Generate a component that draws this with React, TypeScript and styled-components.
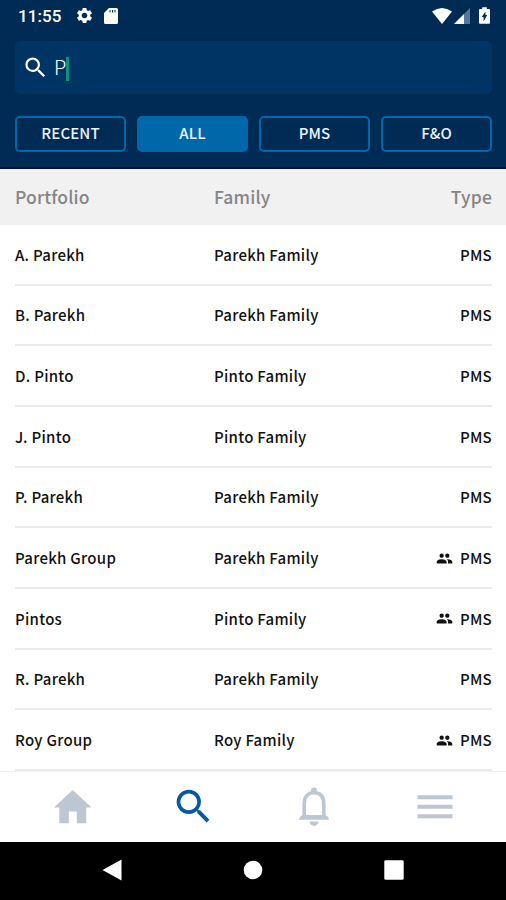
import React from 'react';
import styled, { createGlobalStyle } from 'styled-components';
import { MdSettings, MdPeople, MdSearch } from 'react-icons/md';

const GlobalStyle = createGlobalStyle`
  * { box-sizing: border-box; }
  body { margin: 0; background: #fff; }
  button { font: inherit; letter-spacing: inherit; border: 0; padding: 0; background: none; }
`;

const Screen = styled.div`
  width: 506px;
  height: 900px;
  display: flex;
  flex-direction: column;
  overflow: hidden;
  background: #fff;
  color: #111;
  font-family: 'Noto Sans CJK SC', 'Noto Sans', sans-serif;
  font-weight: 500;
`;

const Header = styled.header`
  height: 169px;
  flex: none;
  background: #002b54;
  border-bottom: 2px solid #001238;
`;

const StatusBar = styled.div`
  height: 41px;
  padding: 0 16px 10px 18px;
  display: flex;
  align-items: center;
  color: #fff;
`;

const Clock = styled.span`
  width: 57px;
  font: 500 17px/20px Roboto, sans-serif;
  letter-spacing: 0.1px;
`;

const StatusIcons = styled.div<{ $end?: boolean }>`
  display: flex;
  align-items: center;
  gap: ${p => (p.$end ? 2 : 10)}px;
  margin-left: ${p => (p.$end ? 'auto' : '0')};
  svg { display: block; }
  svg:last-child { margin-left: ${p => (p.$end ? 7 : 0)}px; }
`;

const SearchField = styled.div`
  height: 53px;
  margin: 0 14px 0 15px;
  padding-left: 7px;
  display: flex;
  align-items: center;
  border-radius: 5px;
  background: #003465;
  color: #fff;
`;

const Query = styled.span`
  margin: 0 0 2px 5px;
  font-size: 20px;
  line-height: 24px;
  font-weight: 300;
`;

const Caret = styled.span`
  width: 3px;
  height: 24px;
  margin: 3px 0 0;
  background: #07937f;
`;

const Filters = styled.div`
  margin: 22px 14px 0 15px;
  display: grid;
  grid-template-columns: repeat(4, 1fr);
  gap: 11px;
`;

const Filter = styled.button<{ $active?: boolean }>`
  height: 36px;
  padding-bottom: 2px;
  border: 2px solid #0068a8;
  border-radius: 5px;
  background: ${p => (p.$active ? '#0068a8' : 'transparent')};
  color: #eef3fb;
  font-size: 15px;
  line-height: 30px;
  letter-spacing: 0.1px;
`;

const Columns = styled.div`
  display: grid;
  grid-template-columns: 199px 1fr auto;
  align-items: center;
`;

const TableHead = styled(Columns)`
  height: 56px;
  flex: none;
  padding: 0 14px 0 15px;
  background: #f1f1f1;
  color: #858585;
  font-size: 17.5px;
  line-height: 24px;
  letter-spacing: 0.15px;
`;

const Rows = styled.div`
  height: 546px;
  flex: none;
  margin: 0 14px 0 15px;
  display: grid;
  grid-template-rows: repeat(9, 1fr);
`;

const Row = styled(Columns)`
  border-bottom: 2px solid #ebebeb;
  font-size: 15px;
  line-height: 20px;
  letter-spacing: 0.27px;
  padding-top: 1px;
`;

const TypeCell = styled.span`
  display: flex;
  align-items: center;
  gap: 7px;
`;

const TabBar = styled.nav`
  height: 71px;
  flex: none;
  padding: 0 11px 1px 13px;
  display: grid;
  grid-template-columns: repeat(4, 1fr);
  place-items: center;
  border-top: 1px solid #f1f1f1;
`;

const Tab = styled.button<{ $active?: boolean }>`
  display: flex;
  color: ${p => (p.$active ? '#0559a3' : '#bdc6d3')};
`;

const SystemBar = styled.div`
  flex: 1;
  padding: 0 102px 2px;
  display: flex;
  justify-content: space-between;
  align-items: center;
  background: #000;
  svg { display: block; }
`;

const rows: [string, string, boolean?][] = [
  ['A. Parekh', 'Parekh Family'],
  ['B. Parekh', 'Parekh Family'],
  ['D. Pinto', 'Pinto Family'],
  ['J. Pinto', 'Pinto Family'],
  ['P. Parekh', 'Parekh Family'],
  ['Parekh Group', 'Parekh Family', true],
  ['Pintos', 'Pinto Family', true],
  ['R. Parekh', 'Parekh Family'],
  ['Roy Group', 'Roy Family', true],
];

const SdCard = () => (
  <svg width="14" height="16" viewBox="0 0 14 16" fill="#fff">
    <path fillRule="evenodd" d="M5 0h7.5Q14 0 14 1.500v13Q14 16 12.500 16h-11Q0 16 0 14.500V5zM5.500 2v2.500h1V2zM8 2v2.500h1V2zM10.500 2v2.500h1V2z" />
  </svg>
);

const Wifi = () => (
  <svg width="20" height="16" viewBox="0 0 20 16" fill="#fff">
    <path d="M0 3.500Q10-3.500 20 3.500L10 16z" />
  </svg>
);

const Signal = () => (
  <svg width="16" height="16" viewBox="0 0 16 16">
    <path d="M16 0v16H0z" fill="#557798" />
    <path d="M10 6v10H0z" fill="#fff" />
  </svg>
);

const Battery = () => (
  <svg width="11" height="17" viewBox="0 0 12 18">
    <path d="M3.500 0h5v2H11q1 0 1 1v14q0 1-1 1H1q-1 0-1-1V3q0-1 1-1h2.500z" fill="#fff" />
    <path d="M7 4.500v4h2L5 15.500v-5H3z" fill="#002b54" />
  </svg>
);

const HomeIcon = () => (
  <svg width="38" height="34" viewBox="0 0 38 34" fill="currentColor">
    <path d="M18.700 0 37.500 17.500h-5.300v15.800H22.800V21.500h-8v11.800H5.300V17.500H0z" />
  </svg>
);

const BellIcon = () => (
  <svg width="32" height="40" viewBox="0 0 32 40" fill="none">
    <path d="M6.200 30V17C6.200 9.500 9.800 5.800 16 5.800S25.800 9.500 25.800 17v13" stroke="currentColor" strokeWidth="3.600" />
    <path d="M13 5V3.500a3 3 0 0 1 6 0V5zM4.500 28h23q3 1.200 3.600 4.700H.9Q1.500 29.200 4.500 28zM11.600 34.500h8.800a4.400 4.400 0 0 1-8.800 0z" fill="currentColor" />
  </svg>
);

const MenuIcon = () => (
  <svg width="36" height="24" viewBox="0 0 36 24" fill="currentColor">
    <path d="M.5.300h35v4H.5zM.5 9.800h35v4H.5zM.5 19.300h35v4H.5z" />
  </svg>
);

export default function App() {
  return (
    <Screen>
      <GlobalStyle />
      <Header>
        <StatusBar>
          <Clock>11:55</Clock>
          <StatusIcons>
            <MdSettings size={19} />
            <SdCard />
          </StatusIcons>
          <StatusIcons $end>
            <Wifi />
            <Signal />
            <Battery />
          </StatusIcons>
        </StatusBar>
        <SearchField>
          <MdSearch size={27} />
          <Query>P</Query>
          <Caret />
        </SearchField>
        <Filters>
          <Filter>RECENT</Filter>
          <Filter $active>ALL</Filter>
          <Filter>PMS</Filter>
          <Filter>F&amp;O</Filter>
        </Filters>
      </Header>
      <TableHead>
        <span>Portfolio</span>
        <span>Family</span>
        <span>Type</span>
      </TableHead>
      <Rows>
        {rows.map(([portfolio, family, group]) => (
          <Row key={portfolio}>
            <span>{portfolio}</span>
            <span>{family}</span>
            <TypeCell>
              {group && <MdPeople size={17} />}
              PMS
            </TypeCell>
          </Row>
        ))}
      </Rows>
      <TabBar>
        <Tab aria-label="Home"><HomeIcon /></Tab>
        <Tab aria-label="Search" $active><MdSearch size={45} /></Tab>
        <Tab aria-label="Alerts"><BellIcon /></Tab>
        <Tab aria-label="Menu"><MenuIcon /></Tab>
      </TabBar>
      <SystemBar>
        <svg width="20" height="22" viewBox="0 0 20 22" fill="#fff"><path d="M.5 11 19.500.500v21z" /></svg>
        <svg width="20" height="20" viewBox="0 0 20 20" fill="#fff"><circle cx="10" cy="10" r="9.300" /></svg>
        <svg width="20" height="20" viewBox="0 0 20 20" fill="#fff"><rect x=".3" y=".3" width="19.400" height="19.400" rx="1.300" /></svg>
      </SystemBar>
    </Screen>
  );
}
